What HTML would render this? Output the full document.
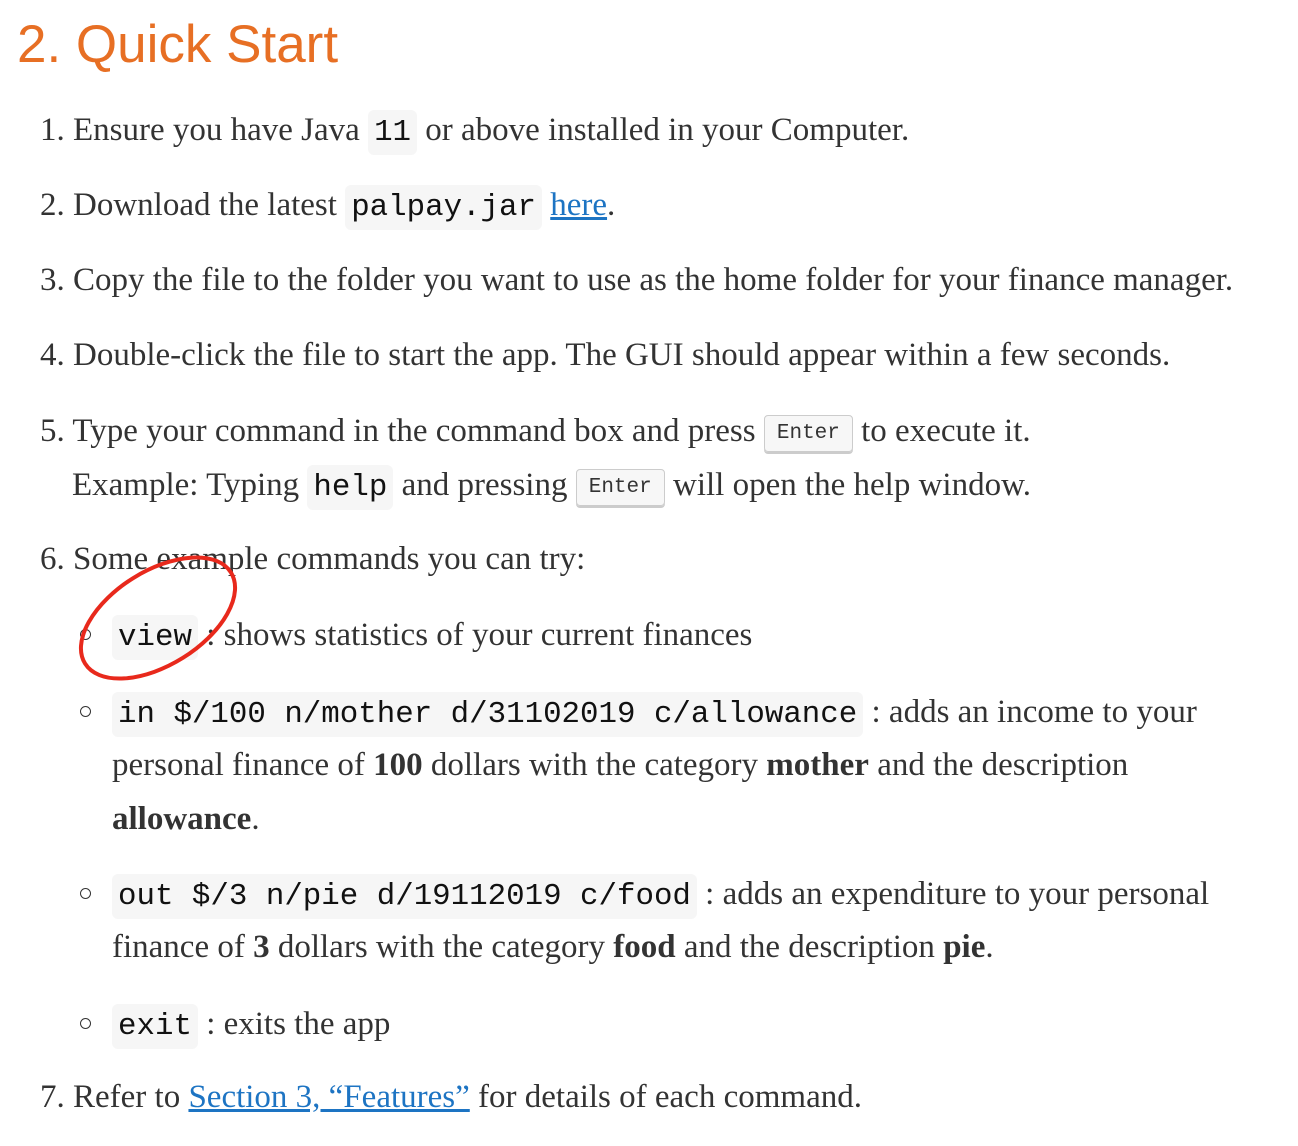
<!DOCTYPE html>
<html><head><meta charset="utf-8"><style>
html,body{margin:0;padding:0;background:#fff;width:1298px;height:1146px;overflow:hidden;position:relative}
body{font-family:"Liberation Serif",serif;font-size:33px;color:#333}
.l{position:absolute;white-space:nowrap;line-height:54px;height:54px}
h1{position:absolute;left:17px;top:12px;margin:0;font-family:"Liberation Sans",sans-serif;font-weight:normal;font-size:53px;color:#e76f24;line-height:66px;letter-spacing:0px}
code{font-family:"Liberation Mono",monospace;font-size:30.8px;background:#f6f6f6;border-radius:6px;padding:5px 6px;color:#111}
kbd{font-family:"Liberation Mono",monospace;font-size:21px;background:#f7f7f7;border:1px solid #ccc;border-radius:4px;box-shadow:0 2px 0 rgba(0,0,0,.2);padding:6px 12px;color:#333;position:relative;top:-3px}
a{color:#1d74c3;text-decoration:underline}
.b{position:absolute;left:80px;width:9px;height:9px;border:1.7px solid #333;border-radius:50%;}
</style></head><body>
<h1>2. Quick Start</h1>

<div class="l" style="left:40px;top:103px">1. Ensure you have Java <code>11</code> or above installed in your Computer.</div>
<div class="l" style="left:40px;top:178px">2. Download the latest <code>palpay.jar</code> <a>here</a>.</div>
<div class="l" style="left:40px;top:253px">3. Copy the file to the folder you want to use as the home folder for your finance manager.</div>
<div class="l" style="left:40px;top:328px">4. Double-click the file to start the app. The GUI should appear within a few seconds.</div>
<div class="l" style="left:40px;top:404px">5. Type your command in the command box and press <kbd>Enter</kbd> to execute it.</div>
<div class="l" style="left:72px;top:458px">Example: Typing <code>help</code> and pressing <kbd>Enter</kbd> will open the help window.</div>
<div class="l" style="left:40px;top:532px">6. Some example commands you can try:</div>

<div class="b" style="top:629px"></div>
<div class="l" style="left:112px;top:608px"><code>view</code> : shows statistics of your current finances</div>

<div class="b" style="top:706px"></div>
<div class="l" style="left:112px;top:685px"><code>in $/100 n/mother d/31102019 c/allowance</code> : adds an income to your</div>
<div class="l" style="left:112px;top:738px">personal finance of <b>100</b> dollars with the category <b>mother</b> and the description</div>
<div class="l" style="left:112px;top:792px"><b>allowance</b>.</div>

<div class="b" style="top:888px"></div>
<div class="l" style="left:112px;top:867px"><code>out $/3 n/pie d/19112019 c/food</code> : adds an expenditure to your personal</div>
<div class="l" style="left:112px;top:920px">finance of <b>3</b> dollars with the category <b>food</b> and the description <b>pie</b>.</div>

<div class="b" style="top:1018px"></div>
<div class="l" style="left:112px;top:997px"><code>exit</code> : exits the app</div>

<div class="l" style="left:40px;top:1070px">7. Refer to <a>Section 3, “Features”</a> for details of each command.</div>

<svg style="position:absolute;left:0;top:0" width="1298" height="1146">
<ellipse cx="158" cy="618" rx="86" ry="47" transform="rotate(-32 158 618)" fill="none" stroke="#e8291c" stroke-width="4"/>
</svg>
</body></html>
